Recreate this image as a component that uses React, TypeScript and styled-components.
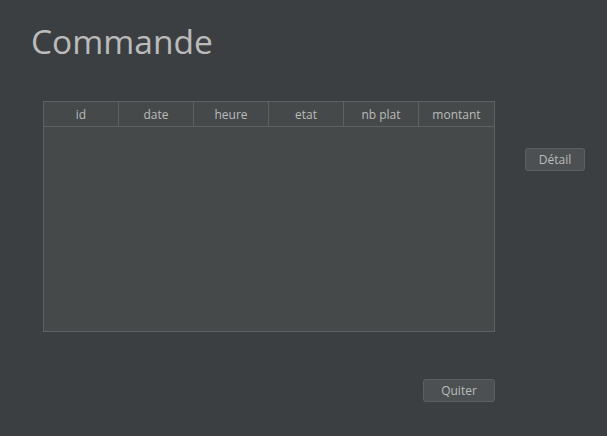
import React from "react";
import styled, { createGlobalStyle } from "styled-components";

const columns = ["id", "date", "heure", "etat", "nb plat", "montant"];

const GlobalStyle = createGlobalStyle`
  html, body {
    margin: 0;
    padding: 0;
    background: #3c3f41;
  }
  body {
    font-family: "Open Sans", "Noto Sans", sans-serif;
    color: #bbbbbb;
  }
`;

const App = () => {
  return (
    <>
      <GlobalStyle />
      <Page>
        <Title>Commande</Title>
        <Main>
          <Table>
            <HeaderRow>
              {columns.map((col, idx) => (
                <HeaderCell key={idx} last={idx === columns.length - 1}>
                  {col}
                </HeaderCell>
              ))}
            </HeaderRow>
            <Body />
          </Table>
          <Side>
            <Button>Détail</Button>
          </Side>
        </Main>
        <Footer>
          <Button wide>Quiter</Button>
        </Footer>
      </Page>
    </>
  );
};

const Page = styled.div`
  width: 607px;
  height: 436px;
  box-sizing: border-box;
  padding: 17px 0 0 0;
`;

const Title = styled.h1`
  margin: 0 0 0 31px;
  font-size: 33.5px;
  font-weight: 400;
  line-height: 48px;
  color: #bbbbbb;
`;

const Main = styled.div`
  display: flex;
  margin: 36px 0 0 43px;
  gap: 30px;
`;

const Table = styled.div`
  width: 452px;
  height: 231px;
  box-sizing: border-box;
  border: 1px solid #5e6163;
  background: #45494a;
  display: flex;
  flex-direction: column;
`;

const HeaderRow = styled.div`
  display: grid;
  grid-template-columns: repeat(6, 75px);
  height: 24px;
  border-bottom: 1px solid #5e6163;
`;

const HeaderCell = styled.div<{ last?: boolean }>`
  display: flex;
  align-items: center;
  justify-content: center;
  font-size: 12px;
  color: #bbbbbb;
  border-right: ${(p) => (p.last ? "none" : "1px solid #5e6163")};
`;

const Body = styled.div`
  flex: 1;
`;

const Side = styled.div`
  padding-top: 46px;
`;

const Button = styled.button<{ wide?: boolean }>`
  width: ${(p) => (p.wide ? "72px" : "60px")};
  height: 23px;
  box-sizing: border-box;
  border: 1px solid #5e6060;
  border-radius: 3px;
  background: #4c5052;
  color: #bbbbbb;
  font-family: "Open Sans", "Noto Sans", sans-serif;
  font-size: 12px;
  padding: 0;
  cursor: pointer;
`;

const Footer = styled.div`
  display: flex;
  justify-content: flex-end;
  width: 495px;
  margin-top: 47px;
`;

export default App;
